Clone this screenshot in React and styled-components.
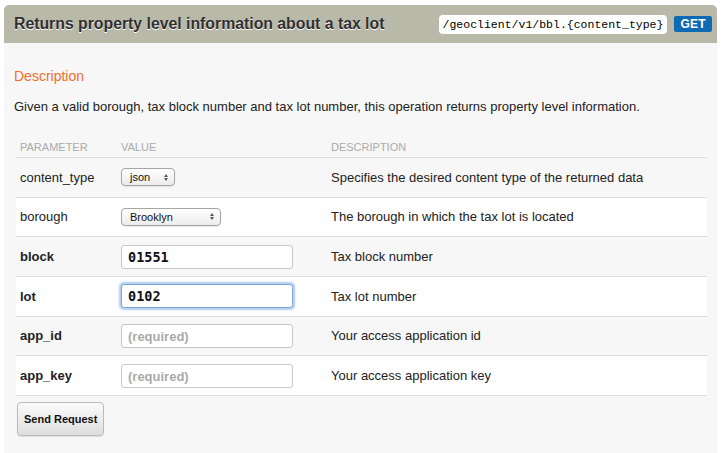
import React from 'react';
import styled, { createGlobalStyle, css } from 'styled-components';

const GlobalStyle = createGlobalStyle`
  html, body {
    margin: 0;
    padding: 0;
    background: #ffffff;
    font-family: "Liberation Sans", Arial, Helvetica, sans-serif;
    color: #333;
  }
`;

const Wrapper = styled.div`
  padding: 5px 6px 0 4px;
  width: 723px;
  height: 453px;
  box-sizing: border-box;
  overflow: hidden;
`;

const Heading = styled.div`
  display: flex;
  align-items: center;
  justify-content: space-between;
  height: 38px;
  padding: 0 5px 0 10px;
  background: #b9b9aa;
  border-radius: 5px 5px 0 0;
  box-sizing: border-box;
`;

const Title = styled.h3`
  margin: 0;
  font-size: 15.8px;
  font-weight: bold;
  color: #2f2f2f;
  text-shadow: 0 1px 0 #fff;
`;

const Endpoint = styled.div`
  display: flex;
  align-items: center;
  gap: 7px;
`;

const Path = styled.code`
  font-family: "Liberation Mono", "DejaVu Sans Mono", monospace;
  font-size: 11.5px;
  color: #000;
  background: #fff;
  border-radius: 4px;
  padding: 3px 4px;
  line-height: 13px;
`;

const Verb = styled.span`
  font-size: 12px;
  font-weight: bold;
  color: #fff;
  background: #0f6ab4;
  border-radius: 2px;
  padding: 1px 6px;
  line-height: 14px;
  letter-spacing: 0.3px;
`;

const Panel = styled.div`
  background: #f7f7f7;
  padding: 25px 10px 30px 12px;
  min-height: 420px;
  box-sizing: border-box;
`;

const SectionTitle = styled.h4`
  margin: 0 0 0 -2px;
  font-size: 14px;
  font-weight: normal;
  color: #f26d2c;
`;

const Intro = styled.p`
  margin: 15px 0 0 -2px;
  font-size: 13px;
  color: #222;
`;

const Table = styled.table`
  width: 100%;
  margin-top: 27px;
  border-collapse: collapse;
  font-size: 13px;
`;

const HeadCell = styled.th`
  text-align: left;
  font-size: 11px;
  font-weight: normal;
  color: #aaa;
  text-transform: uppercase;
  padding: 0 4px 4px 4px;
  border-bottom: 1px solid #ddd;
  width: ${(p) => p.$width || 'auto'};
`;

const Row = styled.tr`
  background: ${(p) => (p.$odd ? '#f7f7f7' : '#ffffff')};
  border-bottom: 1px solid #ddd;
  height: 39.67px;
`;

const Cell = styled.td`
  padding: 0 4px;
  vertical-align: middle;
  color: #222;
  font-weight: ${(p) => (p.$bold ? 'bold' : 'normal')};
`;

const SelectBox = styled.div`
  display: inline-flex;
  align-items: center;
  justify-content: space-between;
  width: ${(p) => p.$width}px;
  height: 18px;
  box-sizing: border-box;
  padding: 0 6px 0 8px;
  border: 1px solid #a5a5a5;
  border-radius: 4px;
  background: linear-gradient(#ffffff, #ececec);
  box-shadow: 0 1px 1px rgba(0, 0, 0, 0.08);
  font-size: 11px;
  color: #111;
  vertical-align: middle;
`;

const Arrows = styled.span`
  display: flex;
  flex-direction: column;
  gap: 1px;
  &::before,
  &::after {
    content: '';
    display: block;
    border-left: 2.5px solid transparent;
    border-right: 2.5px solid transparent;
  }
  &::before {
    border-bottom: 3px solid #555;
  }
  &::after {
    border-top: 3px solid #555;
  }
`;

const TextInput = styled.input`
  width: 172px;
  height: 24px;
  box-sizing: border-box;
  padding: 0 6px;
  border: 1px solid #c8c8c8;
  border-radius: 3px;
  background: #fff;
  font-family: "DejaVu Sans Mono", "Liberation Mono", monospace;
  font-size: 13.5px;
  font-weight: bold;
  color: #111;
  outline: none;
  vertical-align: middle;
  &::placeholder {
    font-family: "Liberation Sans", Arial, sans-serif;
    font-size: 13px;
    font-weight: bold;
    color: #aaa;
  }
  ${(p) =>
    p.$focused &&
    css`
      border-color: #7ea8d8;
      box-shadow: 0 0 2px 2px rgba(110, 160, 225, 0.55);
    `}
`;

const Button = styled.button`
  margin-top: 6px;
  margin-left: 1px;
  height: 34px;
  padding: 0 6px;
  border: 1px solid #bbb;
  border-radius: 4px;
  background: linear-gradient(#fbfbfb, #dedede);
  box-shadow: 0 1px 1px rgba(0, 0, 0, 0.1);
  font-family: "Liberation Sans", Arial, sans-serif;
  font-size: 11px;
  font-weight: bold;
  color: #111;
`;

const params = [
  { name: 'content_type', kind: 'select', value: 'json', width: 54, desc: 'Specifies the desired content type of the returned data' },
  { name: 'borough', kind: 'select', value: 'Brooklyn', width: 100, desc: 'The borough in which the tax lot is located' },
  { name: 'block', kind: 'text', value: '01551', required: true, desc: 'Tax block number' },
  { name: 'lot', kind: 'text', value: '0102', required: true, focused: true, desc: 'Tax lot number' },
  { name: 'app_id', kind: 'text', value: '', required: true, desc: 'Your access application id' },
  { name: 'app_key', kind: 'text', value: '', required: true, desc: 'Your access application key' },
];

export default function App() {
  return (
    <Wrapper>
      <GlobalStyle />
      <Heading>
        <Title>Returns property level information about a tax lot</Title>
        <Endpoint>
          <Path>/geoclient/v1/bbl.{'{content_type}'}</Path>
          <Verb>GET</Verb>
        </Endpoint>
      </Heading>
      <Panel>
        <SectionTitle>Description</SectionTitle>
        <Intro>
          Given a valid borough, tax block number and tax lot number, this operation returns property level information.
        </Intro>
        <Table>
          <thead>
            <tr>
              <HeadCell $width="93px">Parameter</HeadCell>
              <HeadCell $width="202px">Value</HeadCell>
              <HeadCell>Description</HeadCell>
            </tr>
          </thead>
          <tbody>
            {params.map((p, i) => (
              <Row key={p.name} $odd={i % 2 === 0}>
                <Cell $bold={p.required}>{p.name}</Cell>
                <Cell>
                  {p.kind === 'select' ? (
                    <SelectBox $width={p.width}>
                      {p.value}
                      <Arrows />
                    </SelectBox>
                  ) : (
                    <TextInput
                      defaultValue={p.value}
                      placeholder="(required)"
                      $focused={p.focused}
                      readOnly
                    />
                  )}
                </Cell>
                <Cell>{p.desc}</Cell>
              </Row>
            ))}
          </tbody>
        </Table>
        <Button>Send Request</Button>
      </Panel>
    </Wrapper>
  );
}
